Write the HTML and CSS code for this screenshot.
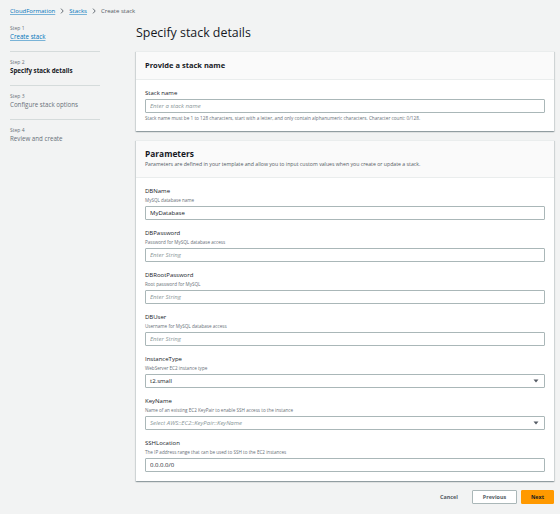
FILE: index.html
```html
<!DOCTYPE html>
<html lang="en">
<head>
<meta charset="utf-8">
<title>Specify stack details</title>
<link rel="stylesheet" href="styles.css">
</head>
<body>
<div class="page">
  <nav class="breadcrumbs">
    <a class="crumb-link" href="#">CloudFormation</a>
    <svg class="chev" viewBox="0 0 4 6" width="4" height="6"><path d="M1 0.6 L3.2 3 L1 5.4" fill="none" stroke="#687078" stroke-width="1"/></svg>
    <a class="crumb-link" href="#">Stacks</a>
    <svg class="chev" viewBox="0 0 4 6" width="4" height="6"><path d="M1 0.6 L3.2 3 L1 5.4" fill="none" stroke="#687078" stroke-width="1"/></svg>
    <span class="crumb-current">Create stack</span>
  </nav>
  <div class="layout">
    <aside class="steps">
      <div class="step">
        <div class="step-num">Step 1</div>
        <a class="step-name step-link" href="#">Create stack</a>
      </div>
      <div class="step">
        <div class="step-num">Step 2</div>
        <div class="step-name step-active">Specify stack details</div>
      </div>
      <div class="step">
        <div class="step-num">Step 3</div>
        <div class="step-name step-disabled">Configure stack options</div>
      </div>
      <div class="step">
        <div class="step-num">Step 4</div>
        <div class="step-name step-disabled">Review and create</div>
      </div>
    </aside>
    <main class="content">
      <h1 class="title">Specify stack details</h1>

      <section class="card">
        <header class="card-header">
          <h2 class="card-title">Provide a stack name</h2>
        </header>
        <div class="card-body">
          <div class="field">
            <label class="field-label">Stack name</label>
            <input class="input" type="text" placeholder="Enter a stack name">
            <div class="hint">Stack name must be 1 to 128 characters, start with a letter, and only contain alphanumeric characters. Character count: 0/128.</div>
          </div>
        </div>
      </section>

      <section class="card">
        <header class="card-header params-header">
          <h2 class="card-title params-title">Parameters</h2>
          <p class="card-desc">Parameters are defined in your template and allow you to input custom values when you create or update a stack.</p>
        </header>
        <div class="card-body">
          <div class="field">
            <label class="field-label">DBName</label>
            <div class="field-desc">MySQL database name</div>
            <input class="input" type="text" value="MyDatabase">
          </div>
          <div class="field">
            <label class="field-label">DBPassword</label>
            <div class="field-desc">Password for MySQL database access</div>
            <input class="input" type="text" placeholder="Enter String">
          </div>
          <div class="field">
            <label class="field-label">DBRootPassword</label>
            <div class="field-desc">Root password for MySQL</div>
            <input class="input" type="text" placeholder="Enter String">
          </div>
          <div class="field">
            <label class="field-label">DBUser</label>
            <div class="field-desc">Username for MySQL database access</div>
            <input class="input" type="text" placeholder="Enter String">
          </div>
          <div class="field">
            <label class="field-label">InstanceType</label>
            <div class="field-desc">WebServer EC2 instance type</div>
            <div class="select">
              <span class="select-value">t2.small</span>
              <svg class="caret" viewBox="0 0 6 4" width="6" height="4"><path d="M0.5 0.5 H5.5 L3 3.5 Z" fill="#545b64"/></svg>
            </div>
          </div>
          <div class="field">
            <label class="field-label">KeyName</label>
            <div class="field-desc">Name of an existing EC2 KeyPair to enable SSH access to the instance</div>
            <div class="select">
              <span class="select-placeholder">Select AWS::EC2::KeyPair::KeyName</span>
              <svg class="caret" viewBox="0 0 6 4" width="6" height="4"><path d="M0.5 0.5 H5.5 L3 3.5 Z" fill="#545b64"/></svg>
            </div>
          </div>
          <div class="field">
            <label class="field-label">SSHLocation</label>
            <div class="field-desc">The IP address range that can be used to SSH to the EC2 instances</div>
            <input class="input" type="text" value="0.0.0.0/0">
          </div>
        </div>
      </section>

      <div class="actions">
        <button class="btn btn-link" type="button">Cancel</button>
        <button class="btn btn-normal" type="button">Previous</button>
        <button class="btn btn-primary" type="button">Next</button>
      </div>
    </main>
  </div>
</div>
</body>
</html>
```

FILE: styles.css
```css
* {
  box-sizing: border-box;
}

html, body {
  margin: 0;
  padding: 0;
}

body {
  background: #f2f3f3;
  font-family: "Open Sans", "Noto Sans", sans-serif;
  color: #16191f;
  width: 560px;
  height: 514px;
  overflow: hidden;
}

.breadcrumbs {
  height: 22px;
  display: flex;
  align-items: center;
  padding-left: 10px;
  gap: 5px;
  font-size: 6px;
  line-height: 8px;
}

.crumb-link {
  color: #0073bb;
  text-decoration: underline;
  text-decoration-color: rgba(0, 115, 187, 0.5);
}

.crumb-current {
  color: #545b64;
}

.chev {
  display: block;
}

.layout {
  display: grid;
  grid-template-columns: 90px 1fr;
  column-gap: 36px;
  padding: 0 6px 0 10px;
}

.steps {
  display: flex;
  flex-direction: column;
}

.step {
  padding: 6px 0 9px;
  border-top: 1px solid #d5dbdb;
}

.step:first-child {
  border-top: none;
  padding-top: 2px;
}

.step-num {
  font-size: 5px;
  line-height: 8px;
  color: #687078;
}

.step-name {
  display: block;
  font-size: 6.2px;
  line-height: 10px;
}

.step-link {
  color: #0073bb;
  text-decoration: underline;
  text-decoration-color: rgba(0, 115, 187, 0.5);
}

.step-active {
  font-weight: 700;
  color: #16191f;
}

.step-disabled {
  color: #687078;
}

.content {
  display: flex;
  flex-direction: column;
}

.title {
  margin: 2px 0 9px;
  font-size: 12.4px;
  line-height: 18px;
  font-weight: 400;
  color: #16191f;
}

.card {
  background: #ffffff;
  box-shadow: 0 1px 1px 0 rgba(0, 28, 36, 0.25), 1px 1px 1px 0 rgba(0, 28, 36, 0.1), -1px 1px 1px 0 rgba(0, 28, 36, 0.1);
  border-top: 1px solid #eaeded;
  margin-bottom: 9px;
}

.card-header {
  background: #fafafa;
  border-bottom: 1px solid #eaeded;
  padding: 7px 9px 8px;
}

.card-title {
  margin: 0;
  font-size: 7.5px;
  line-height: 12px;
  font-weight: 700;
}

.params-header {
  padding: 6px 9px 9px;
}

.params-title {
  font-size: 8.4px;
  line-height: 13px;
}

.card-desc {
  margin: 0;
  font-size: 5.2px;
  line-height: 8px;
  color: #545b64;
}

.card-body {
  padding: 0 9px 9px;
}

.field {
  display: flex;
  flex-direction: column;
  padding-top: 9px;
}

.field-label {
  font-size: 6px;
  line-height: 9px;
  color: #16191f;
}

.field-desc {
  font-size: 4.6px;
  line-height: 8px;
  color: #687078;
}

.input,
.select {
  margin-top: 2px;
  height: 14px;
  width: 100%;
  border: 1px solid #aab7b8;
  border-radius: 1px;
  background: #fff;
  padding: 0 4px;
  font-family: "Open Sans", "Noto Sans", sans-serif;
  font-size: 6px;
  color: #16191f;
  outline: none;
}

.field-label + .input {
  margin-top: 1px;
}

.input::placeholder,
.select-placeholder {
  color: #879596;
  font-style: italic;
}

.select {
  display: flex;
  align-items: center;
  justify-content: space-between;
}

.caret {
  display: block;
  margin-right: 1px;
}

.hint {
  margin-top: 2px;
  font-size: 4.7px;
  line-height: 7px;
  color: #687078;
}

.actions {
  display: flex;
  justify-content: flex-end;
  align-items: center;
  gap: 4px;
}

.btn {
  height: 14px;
  font-family: "Open Sans", "Noto Sans", sans-serif;
  font-size: 5.4px;
  font-weight: 700;
  border-radius: 1px;
  padding: 0;
  cursor: pointer;
}

.btn-link {
  background: transparent;
  border: none;
  color: #545b64;
  width: 30px;
  margin-right: 4px;
}

.btn-normal {
  width: 45px;
  background: #fff;
  border: 1px solid #aab7b8;
  color: #545b64;
}

.btn-primary {
  width: 33px;
  background: #ff9900;
  border: 1px solid #ff9900;
  color: #16191f;
}
```
